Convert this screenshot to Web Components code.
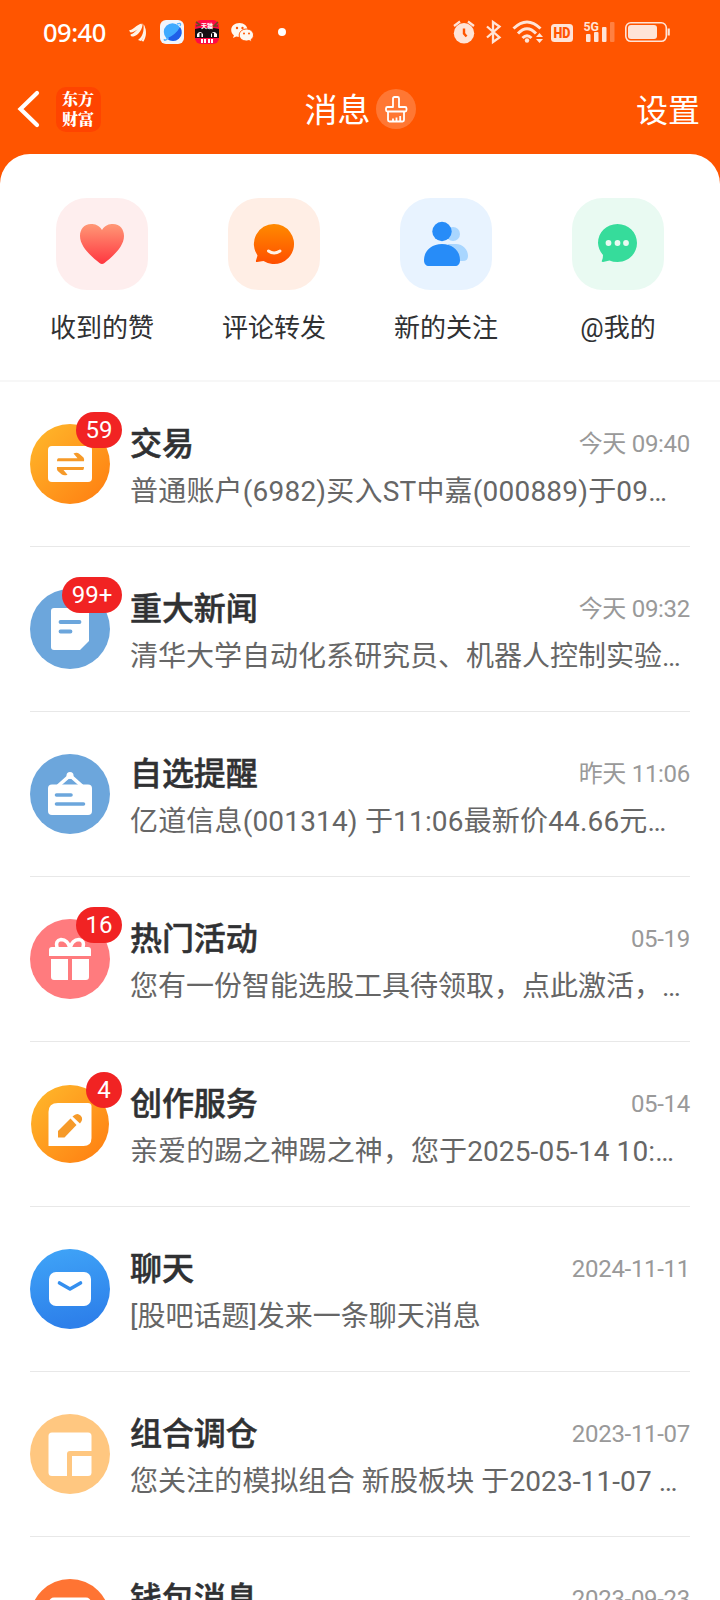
<!DOCTYPE html>
<html lang="zh-CN">
<head>
<meta charset="utf-8">
<title>消息</title>
<style>
html,body{margin:0;padding:0}
body{width:720px;height:1600px;overflow:hidden;background:#ff5500;font-family:Roboto,"Noto Sans CJK SC",sans-serif}
</style>
</head>
<body>
<message-app></message-app>
<script>
const define=(name,html,setup)=>customElements.define(name,class extends HTMLElement{
  constructor(){
    super();
    const t=document.createElement('template');
    t.innerHTML=html;
    this.attachShadow({mode:'open'}).appendChild(t.content.cloneNode(true));
  }
  connectedCallback(){ if(setup) setup(this,this.shadowRoot); }
});

define('status-bar',`<style>
:host{display:flex;height:64px;align-items:center;justify-content:space-between;color:#fff}
.l,.r{display:flex;align-items:center}
.time{font:500 25.5px/64px "Noto Sans",Roboto,sans-serif;letter-spacing:-.5px;margin-left:43px;width:85px}
svg{display:block;flex:none}
</style>
<div class="l"><span class="time">09:40</span>
<svg width="170" height="32" viewBox="128 16 170 32">
<g fill="#fff4e8"><path d="M129 30.500c4-.5 7-5.500 12.500-7-1 4.500-6 8.500-11 9z"/><path d="M130.500 34.500c7-2.500 8-9 12-11 .5 5-4 12-9 13-2 .2-3-.5-3-2z"/><path d="M143.500 24c3 5 2 12-2.500 17l-3-1c5-3.500 6-9 5.500-16z"/><path d="M144 25c3 6 2.500 11-.5 16.500l-2-.5c3-5 3.500-10 2.500-16z"/></g>
<rect x="160" y="20" width="24" height="24" rx="6" fill="#f1f5fc"/>
<circle cx="172.500" cy="32" r="8.700" fill="#3faaff"/><path d="M180 27a8.700 8.700 0 0 1-13 11.500q9-4 13-11.500z" fill="#1f5fe8"/><path d="M164.500 39q-1 3 4-1M177 24q5-2 3 2" stroke="#58b4ff" stroke-width="1.400" fill="none"/>
<rect x="195" y="20" width="24" height="24" rx="6" fill="#ff0b45"/>
<path d="M195 29l5-1h14l5 1v9h-24z" fill="#141014"/>
<path d="M196 22l4 3-4 1M218 22l-4 4h4" stroke="#6a4b22" stroke-width="1.600" fill="none"/>
<path d="M197 37v-3q3-4 6 0v3M211 37v-3q3-4 6 0v3" fill="#fff"/><path d="M200.500 33v4M213 33v4" stroke="#141014" stroke-width="2"/>
<path d="M202 39v4m3-4v4m4-4v4m3-4v4" stroke="#fff" stroke-width="2"/>
<text x="207" y="28" fill="#fff" font-size="6" font-weight="700" text-anchor="middle" font-family="Noto Sans CJK SC">天猫</text>
<g fill="#fff8f0"><path d="M239.500 23c-5 0-8.300 3.200-8.300 7 0 2.200 1 4 2.700 5.300l-.9 2.700 3.200-1.600c1 .3 2 .4 3 .4 5 0 8.300-3.200 8.300-6.800 0-3.800-3.500-7-8-7z"/>
<path d="M246.500 29c-4 0-7.300 2.700-7.300 6s3.100 6 7.300 6c.9 0 1.800-.2 2.600-.4l2.500 1.300-.6-2.200c1.600-1.100 2.500-2.800 2.500-4.700 0-3.300-3-6-7-6z" stroke="#ff5500" stroke-width="1"/></g>
<g fill="#ff5500"><circle cx="237" cy="28" r="1.200"/><circle cx="242.500" cy="28" r="1.200"/><circle cx="244" cy="33.500" r="1"/><circle cx="249" cy="33.500" r="1"/></g>
<circle cx="282" cy="32" r="4" fill="#fff"/>
</svg></div>
<svg class="r" width="270" height="32" viewBox="450 16 270 32" fill="none">
<circle cx="464" cy="33.300" r="10.200" fill="#ffe4d7"/><path d="M454 26l6-4.500M474 26l-6-4.500" stroke="#ffe4d7" stroke-width="2.200"/><path d="M464 28.500v5l2.500 3" stroke="#ff5500" stroke-width="2.400"/>
<path d="M487 26.500l12.500 11-6.500 4.500v-20l6.500 4.500-12.500 11" stroke="#ffe4d7" stroke-width="2.300"/>
<g stroke="#ffe4d7" stroke-width="3"><path d="M513.500 28.500q13.500-13 27 0"/><path d="M518 33.500q9-9.500 18 0"/><path d="M522.500 38q4.500-4.500 9 0"/></g><circle cx="527" cy="40.500" r="2.200" fill="#ffe4d7"/><path d="M536 37l3.500-4 3.500 4zM536 39l3.500 4 3.500-4z" fill="#ffe4d7"/>
<rect x="551" y="24" width="22" height="18" rx="3.500" fill="#ffe4d7"/><text x="562" y="38.200" font-size="14.500" font-weight="900" fill="#ff5500" text-anchor="middle" textLength="17" lengthAdjust="spacingAndGlyphs" font-family="Roboto">HD</text>
<text x="583.500" y="31" font-size="13.500" font-weight="700" fill="#ffe4d7" textLength="15.500" lengthAdjust="spacingAndGlyphs" font-family="Roboto">5G</text>
<g fill="#ffe4d7"><rect x="586" y="34" width="4.500" height="8" rx="1"/><rect x="594" y="32" width="4.500" height="10" rx="1"/><rect x="602" y="27" width="4.500" height="15" rx="1"/><rect x="610" y="22" width="4.500" height="20" rx="1" opacity=".3"/></g>
<rect x="625.800" y="22.800" width="40.500" height="18.500" rx="5" stroke="#ffe4d7" stroke-width="1.600"/><rect x="628" y="25" width="29" height="14" rx="3" fill="#ffe4d7"/><path d="M668.700 28.500v7" stroke="#ffe4d7" stroke-width="2.200"/>
</svg>`);

define('nav-bar',`<style>
:host{display:grid;grid-template-columns:1fr auto 1fr;height:90px;align-items:center;color:#fff;font-size:32px;line-height:44px}
.left,.mid{display:flex;align-items:center}
.left svg{margin-left:17px}
.logo{box-sizing:border-box;width:45px;height:45px;margin-left:14.5px;border-radius:10px;background:#ff4400;font:900 16px/19.5px "Noto Serif CJK SC","Noto Sans CJK SC",sans-serif;text-align:center;padding-top:2.500px}
.mid{gap:5px}
.clean{width:40px;height:40px;border-radius:50%;background:#ff7733}
.set{justify-self:end;margin-right:20px;padding-top:3px}
svg{display:block}
.t{font-size:33px;padding-top:4px}
</style>
<div class="left"><svg width="24" height="40" viewBox="0 0 24 40"><path d="M20 4L3.500 20 20 36" fill="none" stroke="#fff" stroke-width="4.200" stroke-linecap="round"/></svg><div class="logo">东方<br>财富</div></div>
<div class="mid"><span class="t">消息</span><div class="clean"><svg width="40" height="40" viewBox="0 0 40 40" fill="none" stroke="#fff" stroke-width="1.800" stroke-linejoin="round"><path d="M17 18V9.500q0-1.500 1.500-1.500h3q1.500 0 1.500 1.500V18h6q1.500 0 1.500 1.500v1.500q0 1.500-1.500 1.500H11.500q-1.500 0-1.500-1.500v-1.500q0-1.500 1.500-1.500z"/><path d="M12 22.500V31q0 1.500 1.500 1.500h13q1.500 0 1.500-1.500v-8.500M17 32v-2.500M20.500 32v-3.500M24.200 32v-5"/></svg></div></div>
<span class="set">设置</span>`);

const quickIcons={
heart:`<defs><linearGradient id="g" x1="0" y1="0" x2="0" y2="1"><stop stop-color="#ff9876"/><stop offset="1" stop-color="#ff3640"/></linearGradient></defs><path d="M46 32C49 27 53 26 57 26c7 0 11 5.500 11 12 0 11-12 21-19.500 27q-2.500 2-5 0C36 59 24 49 24 38c0-6.500 4-12 11-12 4 0 8 1 11 6z" fill="url(#g)"/>`,
smile:`<defs><linearGradient id="g" x1="0" y1="0" x2="0" y2="1"><stop stop-color="#ff8a00"/><stop offset="1" stop-color="#ff4e00"/></linearGradient></defs><path d="M46 26a20 20 0 1 1-10.500 37L29 64q-1.500 0-1-1.500l1.500-5A20 20 0 0 1 46 26z" fill="url(#g)"/><path d="M40.500 53q5.500 4 11.500 0" fill="none" stroke="#fff1e8" stroke-width="3" stroke-linecap="round"/>`,
people:`<g fill="#a9d6ff"><circle cx="53" cy="36" r="7"/><path d="M48 46h8c7 0 12 6 12 12q0 5-5 5H48z"/></g><circle cx="42" cy="33.500" r="9.700" fill="#278cf8"/><path d="M42 46c11 0 18 7 18 16 0 4-2 6-5 6H29c-3 0-5-2-5-6 0-9 7-16 18-16z" fill="#278cf8"/>`,
chat:`<path d="M45.500 26c11 0 19.500 8.500 19.500 19S56.500 64 45.500 64q-4.500 0-8-1.500L31 64q-2 0-1-1.500 1-2 1-5.500A19 19 0 0 1 26 45c0-10.500 8.500-19 19.500-19z" fill="#36dc9b"/><g fill="#eafaf2"><circle cx="36.500" cy="45" r="2.900"/><circle cx="45.500" cy="45" r="2.900"/><circle cx="54" cy="45" r="2.900"/></g>`};
define('quick-entry',`<style>
:host{display:flex;flex-direction:column;align-items:center;color:#303133}
.tile{width:92px;height:92px;border-radius:31px;background:var(--tile)}
.label{font-size:26px;line-height:38px;margin-top:19px;white-space:nowrap}
</style><div class="tile"></div><div class="label"><slot></slot></div>`,(h,r)=>{
r.querySelector('.tile').innerHTML='<svg width="92" height="92" viewBox="0 0 92 92">'+quickIcons[h.getAttribute('icon')]+'</svg>';});

const grad=(a,b,d)=>`<defs><linearGradient id="g" x1="0" y1="0" x2="${d}" y2="1"><stop stop-color="${a}"/><stop offset="1" stop-color="${b}"/></linearGradient></defs>`;
const disc=(f,r=40)=>`<circle cx="40" cy="40" r="${r}" fill="${f}"/>`;
const rowIcons={
trade:grad('#ffba2c','#ff7c10',1)+disc('url(#g)')+`<rect x="18" y="22" width="44" height="36" rx="4" fill="#fff"/><path d="M28.500 34.200H47.500L43.500 29.500Q47 28 49.500 30L53.500 33.500Q54.500 35 54 37.300H27Q27 34.200 28.500 34.200z" fill="#f69a29"/><path d="M52.500 46H33.500L37.500 50.700Q34 52.200 31.500 50.200L27.500 46.700Q26.500 45.200 27 42.900H54Q54 46 52.500 46z" fill="#f69a29"/>`,
news:disc('#6ca6dc')+`<path d="M24 19h32q3 0 3 3v30l-9 9H24q-3 0-3-3V22q0-3 3-3z" fill="#fff"/><path d="M30.500 33h19M30.500 42.500h10" stroke="#6ca6dc" stroke-width="3.800" stroke-linecap="round"/>`,
alert:disc('#6ca6dc')+`<path d="M28 32l12-10.500 12 10.500" stroke="#fff" stroke-width="3.600" fill="none"/><circle cx="40" cy="21.500" r="3.500" fill="#fff"/><rect x="18" y="30.500" width="44" height="30.500" rx="4" fill="#fff"/><path d="M26.500 41h14.500M26.500 50h27" stroke="#6ca6dc" stroke-width="3.600" stroke-linecap="round"/>`,
gift:disc('#ff7b7e')+`<g fill="none" stroke="#fff" stroke-width="3.600"><path d="M40 29q-2-8-9-8.500-6 1-4 8M40 29q2-8 9-8.500 6 1 4 8"/></g><path d="M22 28h36q3 0 3 3v6H19v-6q0-3 3-3z" fill="#fff"/><path d="M21 40h17v21H24q-3 0-3-3zM42 40h17v18q0 3-3 3H42z" fill="#fff"/>`,
create:grad('#ffba2c','#ff7c10',1)+disc('url(#g)',39)+`<path d="M28 19h30q3.500 0 3.500 3.500V54q0 8-8 8H18.500V28q0-9 9.500-9z" fill="#fff"/><path d="M28 47l12.500-12.500 6 6.500L34.500 53.500H28z" fill="#f69a29"/><path d="M42.500 32.500q4.500-4.500 8-1t-.5 8z" fill="#f69a29"/>`,
mail:grad('#40a5f8','#2d80ea',.2)+disc('url(#g)')+`<rect x="19" y="23" width="42" height="34" rx="7" fill="#fff"/><path d="M29.500 34l10.500 6 10.500-6" stroke="#348fef" stroke-width="3.600" fill="none" stroke-linecap="round" stroke-linejoin="round"/>`,
combo:disc('#ffc780')+`<path d="M22 18.500h36q3.500 0 3.500 3.500v15H40q-3 0-3 3v22H22q-3.500 0-3.500-3.500V22q0-3.500 3.500-3.500z" fill="#fff"/><path d="M42 42h19.500v16.500q0 3.500-3.500 3.500H42z" fill="#fff"/>`,
wallet:disc('#ff7433')+`<rect x="19" y="18.500" width="42" height="40" rx="5" fill="#fff"/>`};
define('message-row',`<style>
:host{display:flex;box-sizing:border-box;height:165px;margin:0 30px;border-bottom:1px solid #e8e8e8;padding-top:42px;gap:20px}
:host([last]){border:0}
.icon{position:relative;width:80px;height:80px;flex:none}
svg{display:block}
.badge{position:absolute;right:-12px;top:-12px;box-sizing:border-box;min-width:36px;height:36px;border-radius:18px;background:#f12323;color:#fff;font-size:24px;line-height:36px;text-align:center;padding:0 9.600px}
.badge:empty{display:none}
.body{flex:1;min-width:0}
.top{display:flex;justify-content:space-between;height:40px}
.title{font-size:32px;line-height:40px;font-weight:500;color:#303133;-webkit-text-stroke:.5px #303133;letter-spacing:-.1px}
.time{font-size:24px;line-height:40px;color:#999;white-space:nowrap;letter-spacing:-.3px}
.sub{font-size:28px;line-height:40px;color:#666;margin-top:8px;white-space:nowrap;overflow:hidden}
.sub span{display:inline-block}
</style>
<div class="icon"><div class="art"></div><div class="badge"></div></div>
<div class="body"><div class="top"><span class="title"></span><span class="time"></span></div><div class="sub"><span><slot></slot></span></div></div>`,(h,r)=>{
const q=s=>r.querySelector(s),a=n=>h.getAttribute(n)||'';
q('.art').innerHTML='<svg width="80" height="80" viewBox="0 0 80 80">'+rowIcons[a('icon')]+'</svg>';
q('.badge').textContent=a('count');
q('.title').textContent=a('name');
q('.time').textContent=a('time');
q('.sub').style.letterSpacing=a('tracking')||'0';
});

define('message-app',`<style>
:host{display:flex;flex-direction:column;width:720px;height:1600px;overflow:hidden;background:#ff5500}
main{flex:1;min-height:0;background:#fff;border-radius:30px 30px 0 0;overflow:hidden}
.quick{box-sizing:border-box;display:grid;grid-template-columns:repeat(4,172px);justify-content:center;height:228px;padding-top:44px;border-bottom:2px solid #f7f7f7}
</style>
<status-bar></status-bar><nav-bar></nav-bar>
<main><div class="quick">
<quick-entry icon="heart" style="--tile:#feeeee">收到的赞</quick-entry>
<quick-entry icon="smile" style="--tile:#ffeee5">评论转发</quick-entry>
<quick-entry icon="people" style="--tile:#e8f3ff">新的关注</quick-entry>
<quick-entry icon="chat" style="--tile:#e9faf2">@我的</quick-entry></div>
<message-row icon="trade" count="59" name="交易" time="今天 09:40" tracking=".2px">普通账户(6982)买入ST中嘉(000889)于09…</message-row>
<message-row icon="news" count="99+" name="重大新闻" time="今天 09:32">清华大学自动化系研究员、机器人控制实验…</message-row>
<message-row icon="alert" name="自选提醒" time="昨天 11:06" tracking=".17px">亿道信息(001314) 于11:06最新价44.66元…</message-row>
<message-row icon="gift" count="16" name="热门活动" time="05-19">您有一份智能选股工具待领取，点此激活，…</message-row>
<message-row icon="create" count="4" name="创作服务" time="05-14" tracking=".1px">亲爱的踢之神踢之神，您于2025-05-14 10:…</message-row>
<message-row icon="mail" name="聊天" time="2024-11-11">[股吧话题]发来一条聊天消息</message-row>
<message-row icon="combo" name="组合调仓" time="2023-11-07" tracking=".1px">您关注的模拟组合 新股板块 于2023-11-07 …</message-row>
<message-row icon="wallet" name="钱包消息" time="2023-09-23" last></message-row>
</main>`);
</script>
</body>
</html>
